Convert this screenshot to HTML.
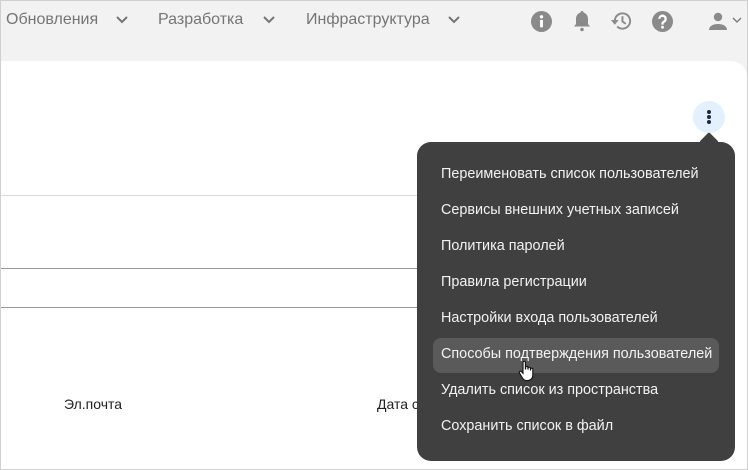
<!DOCTYPE html>
<html><head><meta charset="utf-8"><style>
*{box-sizing:border-box;margin:0;padding:0}
body{width:748px;height:470px;overflow:hidden;font-family:"Liberation Sans",sans-serif;background:#f2f2f2;position:relative;border:1px solid #d0d0d0}
.nav{position:absolute;top:10px;font-size:16px;color:#757575}
.chev{position:absolute;top:14px}
.panel{position:absolute;left:0;top:60px;width:746px;height:408px;background:#fff;border-top-right-radius:16px}
.line{position:absolute;left:0;width:417px;height:1px}
.menu{position:absolute;left:416px;top:141px;width:318px;height:319px;background:#404040;border-radius:14px}
.item{position:absolute;left:24px;font-size:14.4px;color:#f2f2f2;line-height:20px}
.hl{position:absolute;left:16px;top:196px;width:286px;height:35px;background:#5a5a5a;border-radius:8px}
</style></head><body>
<div class="nav" style="left:5px">Обновления</div>
<svg class="chev" style="left:114px" width="14" height="10" viewBox="0 0 14 10"><path d="M2 2l5 5 5-5" stroke="#757575" stroke-width="2" fill="none"/></svg>
<div class="nav" style="left:157px">Разработка</div>
<svg class="chev" style="left:261px" width="14" height="10" viewBox="0 0 14 10"><path d="M2 2l5 5 5-5" stroke="#757575" stroke-width="2" fill="none"/></svg>
<div class="nav" style="left:305px">Инфраструктура</div>
<svg class="chev" style="left:446px" width="14" height="10" viewBox="0 0 14 10"><path d="M2 2l5 5 5-5" stroke="#757575" stroke-width="2" fill="none"/></svg>
<svg style="position:absolute;left:530px;top:10px" width="21" height="21" viewBox="0 0 20 20"><circle cx="10" cy="10" r="10" fill="#8a8a8a"/><rect x="8.6" y="8.5" width="2.8" height="7" fill="#fff"/><circle cx="10" cy="5.5" r="1.6" fill="#fff"/></svg>
<svg style="position:absolute;left:571px;top:9px" width="20" height="22" viewBox="0 0 20 22"><path d="M10 1c1 0 1.6.7 1.6 1.6C14.5 3.4 16 6 16 9v5l2 2.5H2L4 14V9c0-3 1.5-5.6 4.4-6.4C8.4 1.7 9 1 10 1z" fill="#8a8a8a"/><circle cx="10" cy="19.5" r="1.8" fill="#8a8a8a"/></svg>
<svg style="position:absolute;left:609px;top:9px" width="23" height="22" viewBox="0 0 24 22"><path d="M5 11a8 8 0 1 1 2.5 5.8" stroke="#8a8a8a" stroke-width="2" fill="none"/><path d="M1 10h8l-4 5z" fill="#8a8a8a"/><path d="M13 6v5.5l3.5 2.5" stroke="#8a8a8a" stroke-width="2" fill="none"/></svg>
<svg style="position:absolute;left:651px;top:10px" width="21" height="21" viewBox="0 0 20 20"><circle cx="10" cy="10" r="10" fill="#8a8a8a"/><path d="M7 7.5a3 3 0 1 1 4.3 2.7c-.9.5-1.3 1-1.3 2v.8" stroke="#fff" stroke-width="2.2" fill="none"/><circle cx="10" cy="15.5" r="1.4" fill="#fff"/></svg>
<svg style="position:absolute;left:708px;top:11px" width="18" height="18" viewBox="0 0 18 18"><circle cx="9" cy="5" r="4.2" fill="#8a8a8a"/><path d="M0 18c0-4 4-6 9-6s9 2 9 6z" fill="#8a8a8a"/></svg>
<svg style="position:absolute;left:731px;top:16px" width="10" height="7" viewBox="0 0 10 7"><path d="M1 1l4 4 4-4" stroke="#757575" stroke-width="1.3" fill="none"/></svg>
<div class="panel"></div>
<div class="line" style="top:194px;background:#dcdcdc"></div>
<div class="line" style="top:267px;background:#999"></div>
<div class="line" style="top:306px;background:#999"></div>
<div style="position:absolute;left:63px;top:395px;font-size:14px;color:#222">Эл.почта</div>
<div style="position:absolute;left:376px;top:395px;font-size:14px;color:#222">Дата с</div>
<div style="position:absolute;left:692px;top:100px;width:32px;height:32px;border-radius:50%;background:#e3f0fd"></div>
<div style="position:absolute;left:706px;top:109px;width:4px;height:4px;border-radius:50%;background:#1a2a44;box-shadow:0 5px 0 #1a2a44,0 10px 0 #1a2a44"></div>
<div style="position:absolute;left:701px;top:134px;width:14px;height:14px;background:#404040;transform:rotate(45deg);border-radius:2px"></div>
<div class="menu">
<div class="hl"></div>
<div class="item" style="top:22px">Переименовать список пользователей</div>
<div class="item" style="top:58px">Сервисы внешних учетных записей</div>
<div class="item" style="top:94px">Политика паролей</div>
<div class="item" style="top:130px">Правила регистрации</div>
<div class="item" style="top:166px">Настройки входа пользователей</div>
<div class="item" style="top:202px">Способы подтверждения пользователей</div>
<div class="item" style="top:238px">Удалить список из пространства</div>
<div class="item" style="top:274px">Сохранить список в файл</div>
</div>
<svg style="position:absolute;left:517px;top:359px" width="18" height="22" viewBox="0 0 18 22"><path d="M5 2.5c0-1.5 2.4-1.5 2.4 0V9h.2V7.5c0-1.4 2.3-1.4 2.3 0V9h.2V8.3c0-1.4 2.3-1.4 2.3 0V10h.2V9.2c0-1.4 2.2-1.4 2.2 0V15c0 3-2 5.5-5 5.5H8.5c-2 0-3-1-4-2.5L1.5 13c-.8-1.3.9-2.4 2-1.3L5 13.3z" fill="#fff" stroke="#111" stroke-width="1.1"/></svg>
</body></html>
